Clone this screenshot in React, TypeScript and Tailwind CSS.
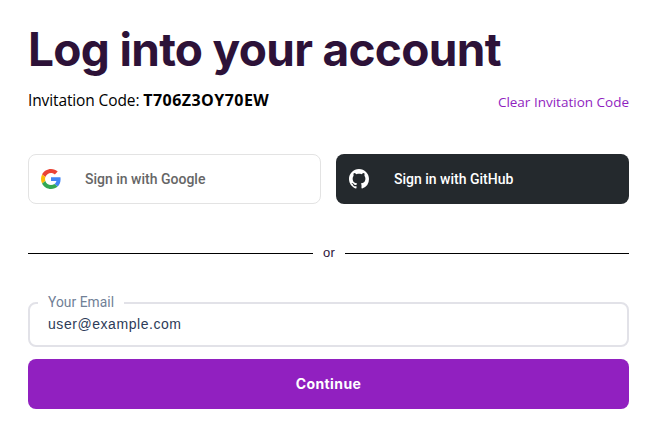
function GoogleLogo() {
  return (
    <svg viewBox="0 0 48 48" className="size-5 shrink-0" aria-hidden="true">
      <path fill="#EA4335" d="M24 9.5c3.54 0 6.71 1.22 9.21 3.6l6.85-6.85C35.9 2.38 30.47 0 24 0 14.62 0 6.51 5.38 2.56 13.22l7.98 6.19C12.43 13.72 17.74 9.5 24 9.5z" />
      <path fill="#4285F4" d="M46.98 24.55c0-1.57-.15-3.09-.38-4.55H24v9.02h12.94c-.58 2.96-2.26 5.48-4.78 7.18l7.73 6c4.51-4.18 7.09-10.36 7.09-17.65z" />
      <path fill="#FBBC05" d="M10.53 28.59c-.48-1.45-.76-2.99-.76-4.59s.27-3.14.76-4.59l-7.98-6.19C.92 16.46 0 20.12 0 24c0 3.88.92 7.54 2.56 10.78l7.97-6.19z" />
      <path fill="#34A853" d="M24 48c6.48 0 11.93-2.13 15.89-5.81l-7.73-6c-2.15 1.45-4.92 2.3-8.16 2.3-6.26 0-11.57-4.22-13.47-9.91l-7.98 6.19C6.51 42.62 14.62 48 24 48z" />
    </svg>
  );
}

function GitHubLogo() {
  return (
    <svg viewBox="0 0 16 16" className="size-5 shrink-0" fill="currentColor" aria-hidden="true">
      <path d="M8 0C3.58 0 0 3.58 0 8c0 3.54 2.29 6.53 5.47 7.59.4.07.55-.17.55-.38 0-.19-.01-.82-.01-1.49-2.01.37-2.53-.49-2.69-.94-.09-.23-.48-.94-.82-1.13-.28-.15-.68-.52-.01-.53.63-.01 1.08.58 1.23.82.72 1.21 1.87.87 2.33.66.07-.52.28-.87.51-1.07-1.78-.2-3.64-.89-3.64-3.95 0-.87.31-1.59.82-2.15-.08-.2-.36-1.02.08-2.12 0 0 .67-.21 2.2.82.64-.18 1.32-.27 2-.27s1.36.09 2 .27c1.53-1.04 2.2-.82 2.2-.82.44 1.1.16 1.92.08 2.12.51.56.82 1.27.82 2.15 0 3.07-1.87 3.75-3.65 3.95.29.25.54.73.54 1.48 0 1.07-.01 1.93-.01 2.2 0 .21.15.46.55.38A8.01 8.01 0 0 0 16 8c0-4.42-3.58-8-8-8z" />
    </svg>
  );
}

export default function App() {
  return (
    <main className="h-[434px] w-full bg-white px-7 pt-[22px] font-['Open_Sans',sans-serif] text-black">
      <h1 className="h-14 whitespace-nowrap font-['Inter',sans-serif] text-[46px] leading-[55px] font-bold tracking-[-0.69px] text-[#2d1238]">
        Log into your account
      </h1>

      <div className="mt-2.5 flex h-6 items-center justify-between whitespace-nowrap">
        <p className="text-[15.5px] leading-[25px]">
          <span className="tracking-[-0.12px]">Invitation Code: </span>
          <strong className="text-[16px] font-bold tracking-[0.45px]">T706Z3OY70EW</strong>
        </p>
        <a href="#" className="pt-1 text-[13.5px] leading-5 text-[#901fc0]">Clear Invitation Code</a>
      </div>

      <div className="mt-[42px] grid grid-cols-2 gap-[15px] font-['Roboto',sans-serif] text-sm font-medium">
        <button className="flex h-[50px] items-center gap-6 rounded-lg border border-[#e3e3e3] px-3 text-[#666666]">
          <GoogleLogo />
          <span>Sign in with Google</span>
        </button>
        <button className="flex h-[50px] items-center gap-[25px] rounded-lg bg-[#24292d] px-[13px] text-white">
          <GitHubLogo />
          <span>Sign in with GitHub</span>
        </button>
      </div>

      <div className="mt-[39px] flex h-5 items-center">
        <div className="h-px w-[285px] bg-black" />
        <span className="flex-1 text-center font-['Liberation_Sans',sans-serif] text-[13px] leading-5 tracking-[0.2px] text-[#2d1238]">or</span>
        <div className="h-px w-[284px] bg-black" />
      </div>

      <fieldset className="mt-[30px] h-[54px] rounded-lg border-2 border-[#e2e2e8] px-2">
        <legend className="h-5 px-2.5 font-['Roboto',sans-serif] text-[13.8px] leading-[19px] tracking-[0.05px] text-[#718096]">Your Email</legend>
        <input
          type="email"
          defaultValue="user@example.com"
          aria-label="Your Email"
          className="block h-[22px] w-full bg-transparent px-2.5 font-['Liberation_Sans',sans-serif] text-sm tracking-[0.55px] text-[#2d3b58] outline-none"
        />
      </fieldset>

      <button className="mt-3 h-[50px] w-full rounded-lg bg-[#9120c0] font-['Inter',sans-serif] text-sm font-bold tracking-[0.4px] text-white">
        Continue
      </button>
    </main>
  );
}
